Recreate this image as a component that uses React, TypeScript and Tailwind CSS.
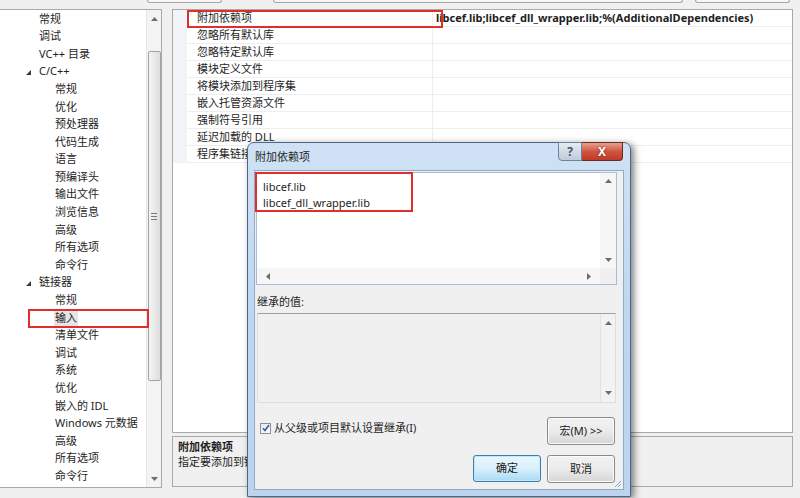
import React from "react";

type TreeItem = { label: string; level: 1 | 2; open?: boolean; selected?: boolean };

const treeItems: TreeItem[] = [
  { label: "常规", level: 1 },
  { label: "调试", level: 1 },
  { label: "VC++ 目录", level: 1 },
  { label: "C/C++", level: 1, open: true },
  { label: "常规", level: 2 },
  { label: "优化", level: 2 },
  { label: "预处理器", level: 2 },
  { label: "代码生成", level: 2 },
  { label: "语言", level: 2 },
  { label: "预编译头", level: 2 },
  { label: "输出文件", level: 2 },
  { label: "浏览信息", level: 2 },
  { label: "高级", level: 2 },
  { label: "所有选项", level: 2 },
  { label: "命令行", level: 2 },
  { label: "链接器", level: 1, open: true },
  { label: "常规", level: 2 },
  { label: "输入", level: 2, selected: true },
  { label: "清单文件", level: 2 },
  { label: "调试", level: 2 },
  { label: "系统", level: 2 },
  { label: "优化", level: 2 },
  { label: "嵌入的 IDL", level: 2 },
  { label: "Windows 元数据", level: 2 },
  { label: "高级", level: 2 },
  { label: "所有选项", level: 2 },
  { label: "命令行", level: 2 },
];

const gridRows = [
  "附加依赖项",
  "忽略所有默认库",
  "忽略特定默认库",
  "模块定义文件",
  "将模块添加到程序集",
  "嵌入托管资源文件",
  "强制符号引用",
  "延迟加载的 DLL",
  "程序集链接资源",
];

function Arrow({ dir }: { dir: "up" | "down" | "left" | "right" }) {
  const paths = {
    up: "M0 4 L3.5 0 L7 4Z",
    down: "M0 0 L7 0 L3.5 4Z",
    left: "M4 0 L4 7 L0 3.5Z",
    right: "M0 0 L4 3.5 L0 7Z",
  };
  const vertical = dir === "up" || dir === "down";
  return (
    <svg
      width={vertical ? 7 : 4}
      height={vertical ? 4 : 7}
      viewBox={vertical ? "0 0 7 4" : "0 0 4 7"}
      className="block"
    >
      <path d={paths[dir]} fill="#6d6d6d" />
    </svg>
  );
}

function WinButton({ children, focused }: { children: React.ReactNode; focused?: boolean }) {
  return (
    <div
      className={
        focused
          ? "flex h-[27px] w-[68px] items-center justify-center rounded-[3px] border border-[#3c7fb1] bg-gradient-to-b from-[#eaf6fd] via-[#d9f0fc] to-[#a7d9f5] text-[11px] text-[#1a1a1a] shadow-[inset_0_0_0_1px_#c5e8f8]"
          : "flex h-[28px] w-[68px] items-center justify-center rounded-[3px] border border-[#8a8a8a] bg-gradient-to-b from-[#f2f2f2] via-[#ebebeb] to-[#d6d6d6] text-[11px] text-[#1a1a1a] shadow-[inset_0_0_0_1px_#fbfbfb]"
      }
    >
      {children}
    </div>
  );
}

function TreePanel() {
  return (
    <div className="flex h-full w-[162px] border-y border-r border-[#a9a9a9] bg-white">
      <div className="flex flex-1 flex-col">
        {treeItems.map((item, i) => (
          <div
            key={i}
            className={`relative flex h-[17.6px] shrink-0 items-center text-[11px] text-[#1e1e1e] ${
              item.level === 1 ? "pl-[39px]" : "pl-[55px]"
            }`}
          >
            {item.open && (
              <svg width="5" height="5" viewBox="0 0 5 5" className="absolute left-[26px] top-[7px]">
                <path d="M5 0 L5 5 L0 5Z" fill="#3a3a3a" />
              </svg>
            )}
            <span className={item.selected ? "bg-[#e6e6e6] px-[1px] -ml-[1px]" : ""}>{item.label}</span>
            {item.selected && (
              <div className="absolute left-[28px] top-[-0.5px] h-[19px] w-[121px] border-2 border-[#dd2f2c]" />
            )}
          </div>
        ))}
      </div>
      <div className="flex w-[15px] flex-col items-center border-l border-[#e6e6e6] bg-[#f3f3f3]">
        <div className="flex h-[17px] items-center">
          <Arrow dir="up" />
        </div>
        <div className="mt-[24px] flex h-[330px] w-[13px] items-center justify-center rounded-[2px] border border-[#a3a3a3] bg-gradient-to-r from-[#f4f4f4] to-[#dedede]">
          <div className="flex flex-col gap-[2px]">
            <div className="h-[1px] w-[6px] bg-[#7a7a7a]" />
            <div className="h-[1px] w-[6px] bg-[#7a7a7a]" />
            <div className="h-[1px] w-[6px] bg-[#7a7a7a]" />
          </div>
        </div>
        <div className="mt-auto flex h-[17px] items-center">
          <Arrow dir="down" />
        </div>
      </div>
    </div>
  );
}

function PropertyGrid() {
  return (
    <div className="relative h-[424px] border border-[#a9a9a9] bg-white">
      <div className="flex flex-col">
        {gridRows.map((name, i) => (
          <div key={i} className="flex h-[17px] text-[11px] text-[#1e1e1e]">
            <div className="w-[14px] bg-[#f1f4f8]" />
            <div className="flex w-[246px] items-center border-b border-r border-[#eeeeee] pl-[10px]">
              {name}
            </div>
            <div className="flex flex-1 items-center border-b border-[#eeeeee] pl-[3px]">
              {i === 0 && (
                <span className="font-bold tracking-[0px]">
                  libcef.lib;libcef_dll_wrapper.lib;%(AdditionalDependencies)
                </span>
              )}
            </div>
          </div>
        ))}
      </div>
      <div className="absolute left-[14px] top-[0px] h-[18px] w-[256px] border-2 border-[#dd2f2c]" />
    </div>
  );
}

function Dialog() {
  return (
    <div className="absolute left-[247px] top-[142px] flex h-[355px] w-[384px] flex-col rounded-t-[7px] border border-[#4a6787] bg-gradient-to-b from-[#cfe2f5] via-[#bed6ef] to-[#bcd4ee] px-[6px] pb-[6px] shadow-[3px_2px_7px_rgba(0,0,0,0.5)]">
      <div className="flex h-[27px] items-start">
        <span className="ml-[1px] mt-[6px] text-[11px] text-[#1e1e1e]">附加依赖项</span>
        <div className="ml-auto mr-[1px] -mt-[1px] flex">
          <div className="flex h-[19px] w-[24px] items-center justify-center rounded-bl-[4px] border border-[#6f829a] bg-gradient-to-b from-[#e4ebf3] to-[#bfcbda] text-[12px] font-bold text-[#44546a]">
            ?
          </div>
          <div className="flex h-[19px] w-[41px] items-center justify-center rounded-br-[4px] border border-l-0 border-[#6b2a20] bg-gradient-to-b from-[#e6a08f] via-[#cf5440] to-[#c0382a] text-[12px] font-bold text-white [text-shadow:0_0_2px_#5a1a10]">
            X
          </div>
        </div>
      </div>
      <div className="relative flex flex-1 flex-col border border-[#8fa9c7] bg-[#f0f0f0]">
        <div className="ml-[1px] mt-[1px] flex h-[113px] w-[361px] flex-col border border-[#a9bcd4] bg-white">
          <div className="flex flex-1">
            <div className="flex flex-1 flex-col pl-[6px] pt-[6px] text-[11px] leading-[16px] text-[#1e1e1e]">
              <span>libcef.lib</span>
              <span>libcef_dll_wrapper.lib</span>
            </div>
            <div className="flex w-[16px] flex-col items-center justify-between bg-[#f6f6f6] py-[6px]">
              <Arrow dir="up" />
              <Arrow dir="down" />
            </div>
          </div>
          <div className="flex h-[16px]">
            <div className="flex flex-1 items-center justify-between bg-[#f6f6f6] px-[9px]">
              <Arrow dir="left" />
              <Arrow dir="right" />
            </div>
            <div className="w-[16px] bg-[#f0f0f0]" />
          </div>
        </div>
        <div className="absolute left-[0px] top-[1px] h-[40px] w-[158px] border-2 border-[#dd2f2c]" />

        <div className="ml-[2px] mt-[9px] h-[16px] text-[11px] leading-[16px] text-[#1e1e1e]">继承的值:</div>
        <div className="ml-[2px] mt-[3px] flex h-[90px] w-[359px] border border-t-[#a0a0a0] border-x-[#dddddd] border-b-[#dddddd] bg-[#f0f0f0]">
          <div className="flex-1" />
          <div className="flex w-[15px] flex-col items-center justify-between border-l border-[#e2e2e2] bg-[#f2f2f2] py-[7px]">
            <Arrow dir="up" />
            <Arrow dir="down" />
          </div>
        </div>

        <div className="mt-[14px] flex h-[28px] items-start">
          <div className="ml-[5px] mt-[3px] flex items-center">
            <div className="flex h-[11px] w-[11px] items-center justify-center border border-[#8e8f8f] bg-gradient-to-br from-[#e8e8e8] to-[#ffffff]">
              <svg width="8" height="8" viewBox="0 0 8 8">
                <path d="M1 4.2 L3 6.5 L7 1" fill="none" stroke="#2a5fa6" strokeWidth="1.6" />
              </svg>
            </div>
            <span className="ml-[3px] text-[11px] text-[#1e1e1e]">从父级或项目默认设置继承(I)</span>
          </div>
          <div className="ml-auto mr-[8px]">
            <WinButton>宏(M) &gt;&gt;</WinButton>
          </div>
        </div>

        <div className="mt-[10px] flex justify-end gap-[6px] pr-[8px]">
          <WinButton focused>确定</WinButton>
          <WinButton>取消</WinButton>
        </div>

        <svg width="8" height="8" viewBox="0 0 8 8" className="absolute bottom-[1px] right-[1px]">
          <path d="M7 1 L1 7 M7 4 L4 7" stroke="#9aa4b0" strokeWidth="1" />
        </svg>
      </div>
    </div>
  );
}

export default function App() {
  return (
    <div className="relative h-[498px] w-[800px] overflow-hidden bg-[#f0f0f0] font-['Noto_Sans','Noto_Sans_CJK_SC',sans-serif]">
      <div className="flex h-[9px] items-start">
        <div className="ml-[147px] h-[3px] w-[75px] rounded-b-[3px] border border-t-0 border-[#a5a5a5] bg-[#f7f7f7]" />
        <div className="ml-[51px] h-[3px] w-[410px] rounded-b-[3px] border border-t-0 border-[#a5a5a5] bg-[#f7f7f7]" />
        <div className="ml-[12px] h-[3px] w-[95px] rounded-b-[3px] border border-t-0 border-[#a5a5a5] bg-[#f7f7f7]" />
      </div>
      <div className="flex h-[479px]">
        <TreePanel />
        <div className="ml-[10px] mr-[7px] flex flex-1 flex-col">
          <PropertyGrid />
          <div className="mt-[3px] flex h-[51px] flex-col border border-[#a9a9a9] bg-[#f0f0f0] pl-[5px] pt-[2px] text-[11px] leading-[15px] text-[#1e1e1e]">
            <span className="font-bold">附加依赖项</span>
            <span>指定要添加到链接命令行的附加项。</span>
          </div>
        </div>
      </div>
      <Dialog />
    </div>
  );
}
